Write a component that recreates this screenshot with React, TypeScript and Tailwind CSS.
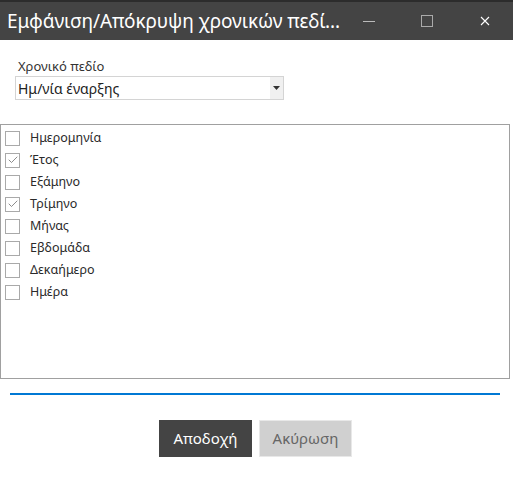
import { Check } from 'lucide-react';

const fields = [
  { label: 'Ημερομηνία', checked: false },
  { label: 'Έτος', checked: true },
  { label: 'Εξάμηνο', checked: false },
  { label: 'Τρίμηνο', checked: true },
  { label: 'Μήνας', checked: false },
  { label: 'Εβδομάδα', checked: false },
  { label: 'Δεκαήμερο', checked: false },
  { label: 'Ημέρα', checked: false },
];

export default function App() {
  return (
    <div className="w-[513px] h-[477px] bg-white overflow-hidden text-[#333]" style={{ fontFamily: '"Noto Sans", "Open Sans", sans-serif' }}>
      <div className="h-[2px] bg-[#2c2c2c]" />
      <div className="h-[38px] bg-[#444444] flex items-center">
        <h1 className="pl-[7px] text-[19px] text-white whitespace-nowrap tracking-[-0.1px]">Εμφάνιση/Απόκρυψη χρονικών πεδί...</h1>
        <div className="ml-auto flex items-center h-full">
          <button className="w-[46px] h-full flex items-center justify-center">
            <span className="block w-[12px] h-px bg-[#bbbbbb]" />
          </button>
          <button className="ml-[12px] w-[46px] h-full flex items-center justify-center">
            <span className="block w-[12px] h-[12px] border border-[#aaaaaa]" />
          </button>
          <button className="ml-[12px] mr-[5px] w-[46px] h-full flex items-center justify-center">
            <svg width="10" height="10" viewBox="0 0 10 10" className="stroke-white">
              <path d="M1 1L9 9M9 1L1 9" strokeWidth="1.1" />
            </svg>
          </button>
        </div>
      </div>

      <div className="pl-[15px] pt-[17px]">
        <label className="block pl-[3px] text-[13px] leading-[18px] text-[#333]">Χρονικό πεδίο</label>
        <div className="mt-[1px] w-[269px] h-[24px] border border-[#d4d4d4] flex items-center">
          <span className="pl-[2px] text-[14px] text-[#222] flex-1">Ημ/νία έναρξης</span>
          <span className="w-[13px] h-full bg-[#f0f0f0] flex items-center justify-center">
            <svg width="7" height="4" viewBox="0 0 7 4">
              <path d="M0 0H7L3.5 4Z" fill="#333" />
            </svg>
          </span>
        </div>
      </div>

      <div className="mt-[24px] w-[510px] h-[255px] border border-[#a0a0a0] pt-[2px]">
        {fields.map(f => (
          <div key={f.label} className="h-[22px] flex items-center pl-[4px]">
            <span className="w-[15px] h-[15px] border border-[#a9a9a9] bg-white flex items-center justify-center">
              {f.checked && <Check size={12} strokeWidth={1.6} color="#6e6e6e" />}
            </span>
            <span className="ml-[10px] text-[12.5px] text-[#2a2a2a]">{f.label}</span>
          </div>
        ))}
      </div>

      <div className="mt-[14px] mx-[10px] w-[490px] h-[2px] bg-[#0078d4]" />

      <div className="mt-[25px] flex justify-center gap-[7px] pr-[2px]">
        <button className="w-[93px] h-[37px] bg-[#444444] text-white text-[15px]">Αποδοχή</button>
        <button className="w-[93px] h-[37px] bg-[#d0d0d0] border border-[#e8e8e8] text-[#666] text-[15px]">Ακύρωση</button>
      </div>
    </div>
  );
}
